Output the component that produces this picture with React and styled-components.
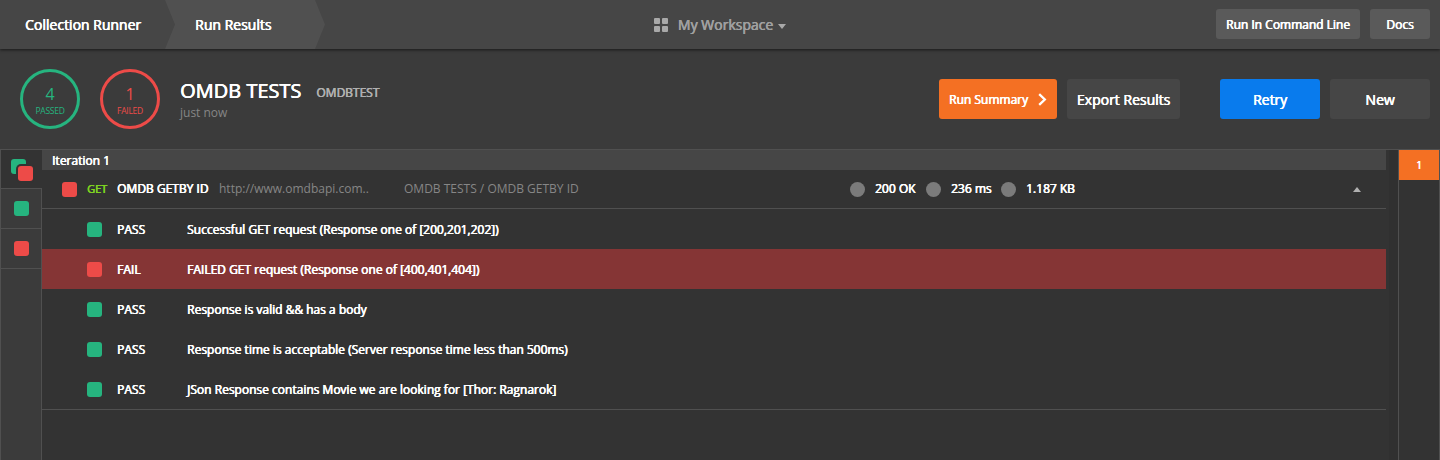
import React from "react";
import styled, { createGlobalStyle } from "styled-components";

const GREEN = "#26b47f";
const RED = "#ed4b48";
const ORANGE = "#f47023";
const LINE = "#505050";

const Global = createGlobalStyle`
  * { box-sizing: border-box; }
  body { margin: 0; background: #333; font-family: "Open Sans", sans-serif; color: #fff; }
  button { font-family: inherit; color: inherit; border: 0; padding: 0; margin: 0; }
`;

const Page = styled.div`
  width: 1440px;
  height: 460px;
  display: flex;
  flex-direction: column;
  overflow: hidden;
`;

const Text = styled.span`
  font-size: ${(p) => p.$size || 12}px;
  line-height: ${(p) => p.$line || 20}px;
  letter-spacing: ${(p) => p.$track || 0}px;
  color: ${(p) => p.$color || "#fff"};
  white-space: nowrap;
  text-shadow: ${(p) => (p.$thin ? "none" : "0.5px 0 0 currentColor, 0 0 0 currentColor")};
`;

const TopBar = styled.header`
  height: 49px;
  flex: none;
  display: grid;
  grid-template-columns: 1fr auto 1fr;
  align-items: center;
  background: #464646;
  box-shadow: 0 1px 3px rgba(0, 0, 0, 0.6);
  z-index: 1;
`;

const Crumbs = styled.nav`
  display: flex;
  height: 49px;
`;

const Crumb = styled.div`
  display: flex;
  align-items: center;
  width: ${(p) => p.$width}px;
  padding-left: ${(p) => p.$pad}px;
  margin-right: -10px;
  background: ${(p) => (p.$active ? "#505050" : "#464646")};
  clip-path: ${(p) =>
    p.$active
      ? "polygon(0 0, calc(100% - 10px) 0, 100% 50%, calc(100% - 10px) 100%, 0 100%, 10px 50%)"
      : "none"};
`;

const Workspace = styled.div`
  display: flex;
  align-items: center;
`;

const GridIcon = styled.svg`
  display: block;
  margin-right: 10px;
`;

const Caret = styled.i`
  width: 0;
  height: 0;
  border-left: 4px solid transparent;
  border-right: 4px solid transparent;
  ${(p) => (p.$up ? "border-bottom: 5px solid #b0b0b0;" : "border-top: 5px solid #a9a9a9; margin: 3px 0 0 5px;")}
`;

const TopActions = styled.div`
  display: flex;
  justify-content: flex-end;
  gap: 10px;
  padding: 0 10px 1px 0;
`;

const Button = styled.button`
  display: flex;
  align-items: center;
  justify-content: center;
  width: ${(p) => p.$width}px;
  height: ${(p) => p.$height || 40}px;
  border-radius: 3px;
  background: ${(p) => p.$bg};
  margin-left: ${(p) => p.$gap || 0}px;
  padding-top: 2px;
`;

const Chevron = styled.svg`
  display: block;
  margin: 0 0 2px 10px;
`;

const Summary = styled.section`
  height: 101px;
  flex: none;
  display: flex;
  align-items: center;
  background: #3b3b3b;
  border-bottom: 1px solid ${LINE};
  padding: 0 10px 0 20px;
`;

const Counter = styled.div`
  width: 60px;
  height: 60px;
  margin-right: 20px;
  border: 3px solid ${(p) => p.$color};
  border-radius: 50%;
  display: flex;
  flex-direction: column;
  align-items: center;
  padding-top: 12px;
`;

const TitleBlock = styled.div`
  flex: 1;
  padding-top: 2px;
`;

const TitleRow = styled.div`
  display: flex;
  align-items: center;
  gap: 15px;
  height: 26px;
`;

const Environment = styled.div`
  display: flex;
  padding-top: 4px;
`;

const Subtitle = styled.div`
  display: flex;
  height: 18px;
`;

const Actions = styled.div`
  display: flex;
  gap: 10px;
`;

const Body = styled.main`
  flex: 1;
  display: flex;
`;

const FilterRail = styled.aside`
  width: 42px;
  display: flex;
  flex-direction: column;
  background: #3b3b3b;
  border-left: 1px solid ${LINE};
`;

const Filter = styled.div`
  height: ${(p) => (p.$active ? 39 : 40)}px;
  display: flex;
  align-items: center;
  justify-content: center;
  background: ${(p) => (p.$active ? "#333" : "transparent")};
  border-bottom: 1px solid ${LINE};
  border-right: ${(p) => (p.$active ? "0" : `1px solid ${LINE}`)};
`;

const RailFill = styled.div`
  flex: 1;
  border-right: 1px solid ${LINE};
`;

const Square = styled.span`
  flex: none;
  display: block;
  width: 15px;
  height: 15px;
  border-radius: 3px;
  background: ${(p) => p.$color};
`;

const Stack = styled.div`
  position: relative;
  width: 22px;
  height: 22px;
  margin: 1px 0 0 1px;
`;

const StackTop = styled(Square)`
  position: absolute;
  right: 0;
  bottom: 0;
  box-shadow: 0 0 0 2px #333;
`;

const Results = styled.section`
  width: 1344px;
`;

const IterationBar = styled.div`
  height: 20px;
  padding: 2px 0 0 10px;
  display: flex;
  align-items: center;
  background: #464646;
`;

const RequestRow = styled.div`
  height: 39px;
  display: flex;
  align-items: center;
  padding: 0 25px 0 20px;
  border-bottom: 1px solid ${LINE};
`;

const Cell = styled.div`
  display: flex;
  align-items: center;
  width: ${(p) => p.$width}px;
  ${(p) => p.$grow && "flex: 1;"}
`;

const Dot = styled.span`
  width: 15px;
  height: 15px;
  margin-right: 10px;
  border-radius: 50%;
  background: #7b7b7b;
`;

const Tests = styled.div`
  border-bottom: 1px solid ${LINE};
`;

const TestRow = styled.div`
  height: 40px;
  display: flex;
  align-items: center;
  padding: 1px 0 0 45px;
  background: ${(p) => (p.$failed ? "#853535" : "transparent")};
`;

const ScrollTrack = styled.div`
  width: 9px;
  margin-left: 3px;
  background: #303030;
`;

const IterationRail = styled.aside`
  width: 42px;
  border-left: 1px solid ${LINE};
  border-right: 1px solid ${LINE};
`;

const IterationTab = styled.div`
  height: 30px;
  display: flex;
  align-items: center;
  justify-content: center;
  background: ${ORANGE};
`;

const tests = [
  { name: "Successful GET request (Response one of [200,201,202])" },
  { name: "FAILED GET request (Response one of [400,401,404])", failed: true },
  { name: "Response is valid && has a body" },
  { name: "Response time is acceptable (Server response time less than 500ms)" },
  { name: "JSon Response contains Movie we are looking for [Thor: Ragnarok]" },
];

export default function App() {
  return (
    <Page>
      <Global />
      <TopBar>
        <Crumbs>
          <Crumb $width={175} $pad={25}>
            <Text $size={14}>Collection Runner</Text>
          </Crumb>
          <Crumb $width={160} $pad={30} $active>
            <Text $size={14}>Run Results</Text>
          </Crumb>
        </Crumbs>
        <Workspace>
          <GridIcon width="14" height="14" viewBox="0 0 14 14" fill="#a9a9a9">
            <rect width="6" height="6" rx="1" />
            <rect x="8" width="6" height="6" rx="1" />
            <rect y="8" width="6" height="6" rx="1" />
            <rect x="8" y="8" width="6" height="6" rx="1" />
          </GridIcon>
          <Text $size={14} $color="#a0a0a0">My Workspace</Text>
          <Caret />
        </Workspace>
        <TopActions>
          <Button $width={144} $height={30} $bg="#5a5a5a"><Text>Run In Command Line</Text></Button>
          <Button $width={60} $height={30} $bg="#5a5a5a"><Text>Docs</Text></Button>
        </TopActions>
      </TopBar>

      <Summary>
        <Counter $color={GREEN}>
          <Text $size={16} $color={GREEN} $thin>4</Text>
          <Text $size={8.5} $track={-0.25} $line={14} $color={GREEN} $thin>PASSED</Text>
        </Counter>
        <Counter $color={RED}>
          <Text $size={16} $color={RED} $thin>1</Text>
          <Text $size={8.5} $track={-0.25} $line={14} $color={RED} $thin>FAILED</Text>
        </Counter>
        <TitleBlock>
          <TitleRow>
            <Text $size={20} $line={26}>OMDB TESTS</Text>
            <Environment><Text $color="#b0b0b0">OMDBTEST</Text></Environment>
          </TitleRow>
          <Subtitle><Text $line={18} $color="#868686" $thin>just now</Text></Subtitle>
        </TitleBlock>
        <Actions>
          <Button $width={118} $bg={ORANGE}>
            <Text>Run Summary</Text>
            <Chevron width="9" height="13" viewBox="0 0 9 13">
              <path d="M1.2 1.2L6.8 6.5L1.2 11.8" fill="none" stroke="#fff" strokeWidth="2.3" />
            </Chevron>
          </Button>
          <Button $width={113} $bg="#464646"><Text $size={14}>Export Results</Text></Button>
          <Button $width={100} $gap={30} $bg="#097bed"><Text $size={14}>Retry</Text></Button>
          <Button $width={100} $bg="#464646"><Text $size={14}>New</Text></Button>
        </Actions>
      </Summary>

      <Body>
        <FilterRail>
          <Filter $active>
            <Stack><Square $color={GREEN} /><StackTop $color={RED} /></Stack>
          </Filter>
          <Filter><Square $color={GREEN} /></Filter>
          <Filter><Square $color={RED} /></Filter>
          <RailFill />
        </FilterRail>
        <Results>
          <IterationBar><Text>Iteration 1</Text></IterationBar>
          <RequestRow>
            <Cell $width={25}><Square $color={RED} /></Cell>
            <Cell $width={30}><Text $size={11} $color="#7ed321">GET</Text></Cell>
            <Cell $width={102}><Text>OMDB GETBY ID</Text></Cell>
            <Cell $width={185}><Text $color="#868686" $thin>http://www.omdbapi.com..</Text></Cell>
            <Cell $width={446}><Text $color="#868686" $thin>OMDB TESTS / OMDB GETBY ID</Text></Cell>
            <Cell $width={76}><Dot /><Text>200 OK</Text></Cell>
            <Cell $width={75}><Dot /><Text>236 ms</Text></Cell>
            <Cell $grow><Dot /><Text>1.187 KB</Text></Cell>
            <Caret $up />
          </RequestRow>
          <Tests>
            {tests.map((t) => (
              <TestRow key={t.name} $failed={t.failed}>
                <Cell $width={30}><Square $color={t.failed ? RED : GREEN} /></Cell>
                <Cell $width={70}><Text>{t.failed ? "FAIL" : "PASS"}</Text></Cell>
                <Text>{t.name}</Text>
              </TestRow>
            ))}
          </Tests>
        </Results>
        <ScrollTrack />
        <IterationRail>
          <IterationTab><Text $size={10}>1</Text></IterationTab>
        </IterationRail>
      </Body>
    </Page>
  );
}
